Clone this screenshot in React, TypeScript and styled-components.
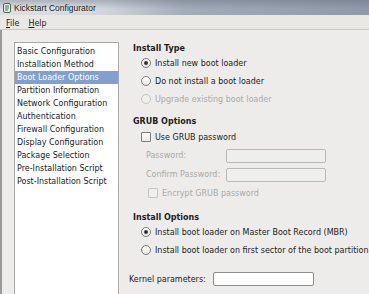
import { createGlobalStyle, styled } from 'styled-components'

const GlobalStyle = createGlobalStyle`
  html, body {
    margin: 0;
    padding: 0;
    background: #edecea;
  }
  body {
    font-family: "DejaVu Sans", sans-serif;
    font-size: 8px;
    color: #222;
  }
`

const Window = styled.div`
  width: 369px;
  height: 294px;
  display: flex;
  flex-direction: column;
  overflow: hidden;
  background: #edecea;
`

const TitleBar = styled.div`
  height: 15px;
  display: flex;
  align-items: center;
  gap: 2px;
  padding-left: 2px;
  background:
    linear-gradient(180deg, rgba(90, 100, 118, 0.35) 0%, rgba(255, 255, 255, 0) 60%),
    linear-gradient(90deg, #dcdfe3 0%, #d2d6dc 28%, #a2abb8 50%, #8f99a8 100%);
  font-family: "Liberation Sans", sans-serif;
  font-size: 8.5px;
  color: #1a1a1a;
`

const TitleText = styled.span`
  text-shadow: 0 0 4px #f4f4f4;
`

const MenuBar = styled.div`
  height: 15px;
  display: flex;
  align-items: center;
  gap: 9px;
  padding: 2px 0 0 6px;
  box-sizing: border-box;
  background: #e9e8e5;
  border-bottom: 1px solid #c9c8c4;
  font-size: 8px;
`

const MenuItem = styled.span`
  & u {
    text-decoration: underline;
  }
`

const Body = styled.div`
  flex: 1;
  display: flex;
  border-left: 2px solid #9b9b99;
  padding: 12px 0 0 12px;
  gap: 12px;
`

const NavList = styled.ul`
  list-style: none;
  margin: 0;
  padding: 2px 0 0 0;
  width: 103px;
  flex-shrink: 0;
  background: #fff;
  border: 1px solid #a8a8a6;
  border-bottom: none;
`

const NavItem = styled.li<{ $active?: boolean }>`
  height: 13px;
  line-height: 13px;
  padding-left: 2px;
  white-space: nowrap;
  background: ${(p) => (p.$active ? '#829fcd' : 'transparent')};
  color: ${(p) => (p.$active ? '#fff' : '#222')};
`

const Panel = styled.div`
  flex: 1;
  display: flex;
  flex-direction: column;
  padding-top: 1px;
`

const SectionTitle = styled.div`
  font-weight: bold;
  height: 11px;
  line-height: 11px;
  margin-left: 2px;
`

const OptionRow = styled.label<{ $disabled?: boolean; $indent?: number }>`
  display: flex;
  align-items: center;
  gap: 4px;
  height: 18px;
  padding-left: ${(p) => p.$indent ?? 10}px;
  color: ${(p) => (p.$disabled ? '#a9a9a7' : '#222')};
  white-space: nowrap;
`

const Radio = styled.span<{ $checked?: boolean; $disabled?: boolean }>`
  width: 8px;
  height: 8px;
  border-radius: 50%;
  border: 1px solid ${(p) => (p.$disabled ? '#c4c4c2' : '#7c7c7a')};
  background: ${(p) => (p.$disabled ? '#efefed' : 'linear-gradient(#fff, #e6e6e4)')};
  display: flex;
  align-items: center;
  justify-content: center;
  flex-shrink: 0;
  &::after {
    content: '';
    display: ${(p) => (p.$checked ? 'block' : 'none')};
    width: 4px;
    height: 4px;
    border-radius: 50%;
    background: #333;
  }
`

const Checkbox = styled.span<{ $disabled?: boolean }>`
  width: 8px;
  height: 8px;
  border-radius: 1px;
  border: 1px solid ${(p) => (p.$disabled ? '#c4c4c2' : '#7c7c7a')};
  background: ${(p) => (p.$disabled ? '#efefed' : 'linear-gradient(#fff, #e9e9e7)')};
  flex-shrink: 0;
`

const FieldRow = styled.div`
  display: flex;
  align-items: center;
  height: 19px;
  padding-left: 15px;
  color: #a9a9a7;
`

const FieldLabel = styled.span<{ $w: number }>`
  width: ${(p) => p.$w}px;
  flex-shrink: 0;
  white-space: nowrap;
`

const TextBox = styled.span<{ $w: number; $disabled?: boolean }>`
  width: ${(p) => p.$w}px;
  height: 12px;
  border: 1px solid ${(p) => (p.$disabled ? '#b9b9b7' : '#8e8e8c')};
  border-radius: 2px;
  background: ${(p) => (p.$disabled ? '#eeeeec' : '#fff')};
`

const Gap = styled.div<{ $h: number }>`
  height: ${(p) => p.$h}px;
`

const KernelRow = styled.div`
  display: flex;
  align-items: center;
  gap: 7px;
  height: 16px;
  margin-left: -2px;
`

function AppIcon() {
  return (
    <svg width="10" height="12" viewBox="0 0 10 12">
      <rect x="1.5" y="1.5" width="7" height="9" rx="1.5" fill="#e8efe8" stroke="#4a6a4a" />
      <path d="M3 4h4M3 6h4M3 8h3" stroke="#3c7a3c" strokeWidth="1" />
    </svg>
  )
}

const navItems = [
  'Basic Configuration',
  'Installation Method',
  'Boot Loader Options',
  'Partition Information',
  'Network Configuration',
  'Authentication',
  'Firewall Configuration',
  'Display Configuration',
  'Package Selection',
  'Pre-Installation Script',
  'Post-Installation Script',
]

export default function App() {
  return (
    <Window>
      <GlobalStyle />
      <TitleBar>
        <AppIcon />
        <TitleText>Kickstart Configurator</TitleText>
      </TitleBar>
      <MenuBar>
        <MenuItem>
          <u>F</u>ile
        </MenuItem>
        <MenuItem>
          <u>H</u>elp
        </MenuItem>
      </MenuBar>
      <Body>
        <NavList>
          {navItems.map((item) => (
            <NavItem key={item} $active={item === 'Boot Loader Options'}>
              {item}
            </NavItem>
          ))}
        </NavList>
        <Panel>
          <SectionTitle>Install Type</SectionTitle>
          <OptionRow>
            <Radio $checked />
            Install new boot loader
          </OptionRow>
          <OptionRow>
            <Radio />
            Do not install a boot loader
          </OptionRow>
          <OptionRow $disabled>
            <Radio $disabled />
            Upgrade existing boot loader
          </OptionRow>
          <Gap $h={8} />
          <SectionTitle>GRUB Options</SectionTitle>
          <Gap $h={1} />
          <OptionRow>
            <Checkbox />
            Use GRUB password
          </OptionRow>
          <FieldRow>
            <FieldLabel $w={80}>Password:</FieldLabel>
            <TextBox $w={98} $disabled />
          </FieldRow>
          <FieldRow>
            <FieldLabel $w={80}>Confirm Password:</FieldLabel>
            <TextBox $w={98} $disabled />
          </FieldRow>
          <OptionRow $disabled $indent={17}>
            <Checkbox $disabled />
            Encrypt GRUB password
          </OptionRow>
          <Gap $h={10} />
          <SectionTitle>Install Options</SectionTitle>
          <OptionRow>
            <Radio $checked />
            Install boot loader on Master Boot Record (MBR)
          </OptionRow>
          <OptionRow>
            <Radio />
            Install boot loader on first sector of the boot partition
          </OptionRow>
          <Gap $h={12} />
          <KernelRow>
            <span>Kernel parameters:</span>
            <TextBox $w={99} />
          </KernelRow>
        </Panel>
      </Body>
    </Window>
  )
}
